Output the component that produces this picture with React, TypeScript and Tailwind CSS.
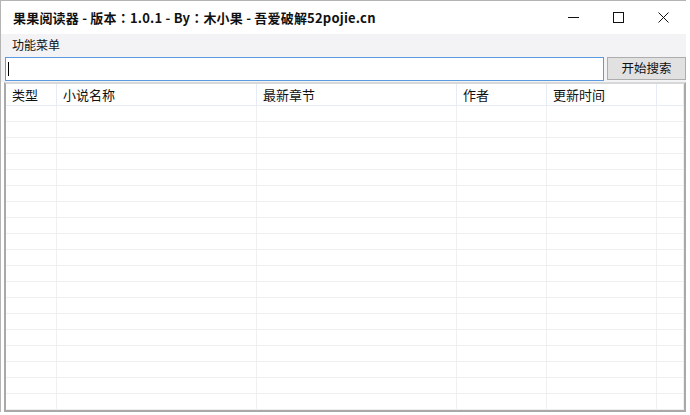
import React from "react";

const cols = [51, 200, 200, 90, 110, 27];
const headers = ["类型", "小说名称", "最新章节", "作者", "更新时间", ""];

function Colon() {
  return <span style={{ fontFamily: '"Noto Sans CJK TC", sans-serif' }}>：</span>;
}

export default function App() {
  const rows = Array.from({ length: 19 });
  return (
    <div
      className="w-[690px] h-[415px] bg-white overflow-hidden"
      style={{ fontFamily: '"Noto Sans CJK SC", "Microsoft YaHei", sans-serif' }}
    >
      <div className="w-[686px] h-[412px] border-l border-t border-[#b4b4b4] flex flex-col">
        {/* Title bar */}
        <div className="h-[33px] flex items-center bg-white shrink-0">
          <div className="pl-[12px] text-[13px] font-bold text-[#111] tracking-[0.2px] leading-none">
            果果阅读器 - 版本<Colon />1.0.1 - By<Colon />木小果 - 吾爱破解52pojie.cn
          </div>
          <div className="ml-auto flex items-center h-full">
            <div className="w-[45px] h-full flex items-center justify-center">
              <svg width="11" height="11" viewBox="0 0 11 11">
                <line x1="0" y1="5.5" x2="11" y2="5.5" stroke="#111" strokeWidth="1" />
              </svg>
            </div>
            <div className="w-[45px] h-full flex items-center justify-center">
              <svg width="11" height="11" viewBox="0 0 11 11">
                <rect x="0.5" y="0.5" width="10" height="10" fill="none" stroke="#111" strokeWidth="1" />
              </svg>
            </div>
            <div className="w-[45px] h-full flex items-center justify-center">
              <svg width="11" height="11" viewBox="0 0 11 11">
                <path d="M0.5 0.5 L10.5 10.5 M10.5 0.5 L0.5 10.5" stroke="#111" strokeWidth="1" />
              </svg>
            </div>
          </div>
        </div>
        {/* Menu bar */}
        <div className="h-[21px] bg-[#f3f3f5] flex items-center shrink-0">
          <span className="pl-[11px] text-[12px] text-[#111] leading-none">功能菜单</span>
        </div>
        {/* Search row */}
        <div className="h-[27px] flex items-center pl-[4px] gap-[3px] bg-[#f3f3f5] shrink-0">
          <div className="w-[599px] h-[24px] border border-[#5a9be0] bg-white flex items-center pl-[2px]">
            <div className="w-[1px] h-[14px] bg-black" />
          </div>
          <div className="w-[79px] h-[23px] border border-[#adadad] bg-[#e1e1e1] flex items-center justify-center text-[12.5px] text-[#111]">
            开始搜索
          </div>
        </div>
        {/* Table */}
        <div className="ml-[3px] flex-1 border-2 border-[#a9a9a9] border-t-[#d8d8d8] bg-white flex flex-col overflow-hidden">
          <div className="flex h-[22px] border-b border-[#e5ecf5] shrink-0">
            {headers.map((h, i) => (
              <div
                key={i}
                className="h-full flex items-center pl-[6px] text-[13px] text-[#111] border-r border-[#e5ecf5] shrink-0"
                style={{ width: cols[i] }}
              >
                {h}
              </div>
            ))}
          </div>
          {rows.map((_, r) => (
            <div key={r} className="flex h-[16px] border-b border-[#efefef] shrink-0">
              {cols.map((w, i) => (
                <div key={i} className="h-full border-r border-[#f0f0f0] shrink-0" style={{ width: w }} />
              ))}
            </div>
          ))}
        </div>
      </div>
    </div>
  );
}
